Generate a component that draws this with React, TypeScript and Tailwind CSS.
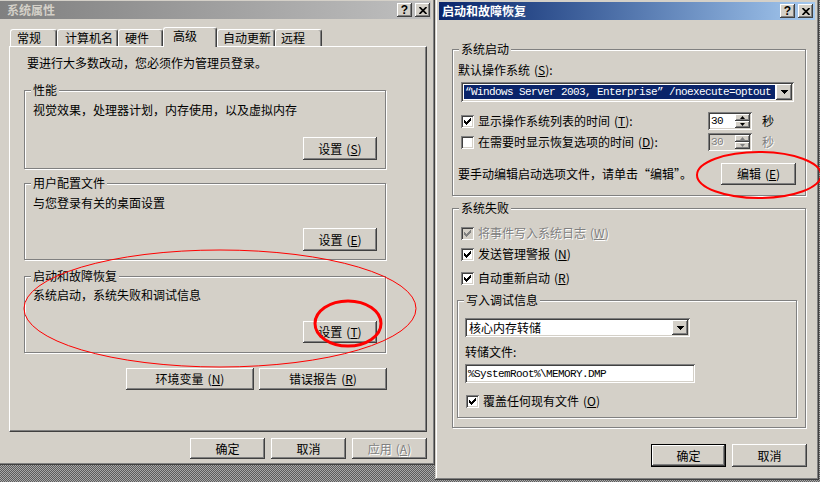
import React from "react";

const FRAME =
  "shadow-[inset_-1px_-1px_0_#404040,inset_1px_1px_0_#d4d0c8,inset_-2px_-2px_0_#808080,inset_2px_2px_0_#ffffff]";
const RAISED =
  "shadow-[inset_-1px_-1px_0_#404040,inset_1px_1px_0_#ffffff,inset_-2px_-2px_0_#808080,inset_2px_2px_0_#d4d0c8]";
const SUNKEN =
  "shadow-[inset_1px_1px_0_#808080,inset_-1px_-1px_0_#ffffff,inset_2px_2px_0_#404040,inset_-2px_-2px_0_#d4d0c8]";
const MONO = "font-['Liberation_Mono',monospace] text-[11px] tracking-[-0.6px]";
const DIS = "text-[#808080] [text-shadow:1px_1px_0_#ffffff]";

function M({ k }: { k: string }) {
  return (
    <span className="ml-[4px]">
      (<span className="underline">{k}</span>)
    </span>
  );
}

function Btn({
  className = "",
  children,
  def = false,
  disabled = false,
}: {
  className?: string;
  children: React.ReactNode;
  def?: boolean;
  disabled?: boolean;
}) {
  return (
    <div
      className={`flex items-center justify-center bg-[#d4d0c8] whitespace-nowrap ${
        def
          ? "border border-black shadow-[inset_-1px_-1px_0_#404040,inset_1px_1px_0_#ffffff,inset_-2px_-2px_0_#808080]"
          : RAISED
      } ${disabled ? DIS : "text-black"} ${className}`}
    >
      {children}
    </div>
  );
}

function CheckMark({ color }: { color: string }) {
  const pts = [
    [0, 2],
    [1, 3],
    [2, 4],
    [3, 3],
    [4, 2],
    [5, 1],
    [6, 0],
  ];
  return (
    <svg width="7" height="7" viewBox="0 0 7 7" shapeRendering="crispEdges">
      {pts.map(([x, y]) => (
        <rect key={x} x={x} y={y} width="1" height="3" fill={color} />
      ))}
    </svg>
  );
}

function Check({ checked, disabled = false }: { checked: boolean; disabled?: boolean }) {
  return (
    <span
      className={`flex w-[13px] h-[13px] shrink-0 items-center justify-center ${
        disabled ? "bg-[#d4d0c8]" : "bg-white"
      } ${SUNKEN}`}
    >
      {checked && <CheckMark color={disabled ? "#808080" : "#000000"} />}
    </span>
  );
}

function DropBtn() {
  return (
    <div className={`w-[16px] h-full shrink-0 flex items-center justify-center bg-[#d4d0c8] ${RAISED}`}>
      <svg width="7" height="4" viewBox="0 0 7 4" shapeRendering="crispEdges">
        <polygon points="0,0 7,0 3.5,4" fill="#000" />
      </svg>
    </div>
  );
}

function Spin({ disabled = false }: { disabled?: boolean }) {
  const c = disabled ? "#808080" : "#000000";
  return (
    <div
      className={`flex w-[44px] h-[18px] p-[2px] ${disabled ? "bg-[#d4d0c8]" : "bg-white"} ${SUNKEN}`}
    >
      <div className={`flex-1 flex items-center pl-[1px] ${MONO} ${disabled ? DIS : ""}`}>30</div>
      <div className="w-[15px] flex flex-col">
        <div className={`flex-1 flex items-center justify-center bg-[#d4d0c8] ${RAISED}`}>
          <svg width="5" height="3" viewBox="0 0 5 3">
            <polygon points="2.5,0 5,3 0,3" fill={c} />
          </svg>
        </div>
        <div className={`flex-1 flex items-center justify-center bg-[#d4d0c8] ${RAISED}`}>
          <svg width="5" height="3" viewBox="0 0 5 3">
            <polygon points="0,0 5,0 2.5,3" fill={c} />
          </svg>
        </div>
      </div>
    </div>
  );
}

function Group({
  label,
  className = "",
  children,
}: {
  label: string;
  className?: string;
  children?: React.ReactNode;
}) {
  return (
    <div
      className={`relative flex flex-col shrink-0 border border-[#808080] shadow-[1px_1px_0_#ffffff,inset_1px_1px_0_#ffffff] ${className}`}
    >
      <span className="absolute -top-[9px] left-[6px] bg-[#d4d0c8] px-[2px] leading-[16px]">
        {label}
      </span>
      {children}
    </div>
  );
}

function TitleBar({ title, active }: { title: string; active: boolean }) {
  return (
    <div
      className={`flex items-center shrink-0 h-[18px] ${
        active
          ? "bg-linear-to-r from-[#0a246a] to-[#a6caf0] text-white pl-[3px] pr-[2px]"
          : "bg-linear-to-r from-[#808080] to-[#c0c0c0] text-[#d4d0c8] pl-[7px] pr-[1px]"
      }`}
    >
      <span className="font-bold leading-[16px] flex-1">{title}</span>
      <div className="flex gap-[3px]">
        <div className={`w-[15px] h-[14px] flex items-center justify-center bg-[#d4d0c8] ${RAISED}`}>
          <span className="font-['Liberation_Sans',sans-serif] font-bold text-[12px] leading-[12px] text-black">
            ?
          </span>
        </div>
        <div className={`w-[15px] h-[14px] flex items-center justify-center bg-[#d4d0c8] ${RAISED}`}>
          <svg width="8" height="7" viewBox="0 0 8 7">
            <path d="M0.5 0 L7.5 7 M7.5 0 L0.5 7" stroke="#000" strokeWidth="1.7" />
          </svg>
        </div>
      </div>
    </div>
  );
}

const TAB =
  "flex items-start h-[17px] bg-[#d4d0c8] border-t border-l border-white border-r border-r-[#404040] rounded-t-[3px] shadow-[inset_-1px_0_0_#808080] shrink-0 whitespace-nowrap";

function LeftWindow() {
  return (
    <div
      className={`absolute left-[-4px] top-[-3px] w-[439px] h-[468px] bg-[#d4d0c8] p-[4px] flex flex-col ${FRAME}`}
    >
      <TitleBar title="系统属性" active={false} />
      <div className="mt-[8px] h-[19px] flex items-end pl-[10px] relative z-10 shrink-0">
        <div className={`${TAB} w-[47px] pl-[6px]`}>常规</div>
        <div className={`${TAB} w-[61px] pl-[7px]`}>计算机名</div>
        <div className={`${TAB} w-[45px] pl-[6px]`}>硬件</div>
        <div className={`${TAB} w-[54px] h-[20px] -mb-[1px] pl-[9px]`}>高级</div>
        <div className={`${TAB} w-[58px] pl-[5px]`}>自动更新</div>
        <div className={`${TAB} w-[47px] pl-[5px]`}>远程</div>
      </div>
      <div className="ml-[9px] w-[418px] h-[386px] shrink-0 flex flex-col border-t border-l border-white border-r border-b border-r-[#404040] border-b-[#404040] shadow-[inset_-1px_-1px_0_#808080]">
        <div className="mt-[8px] ml-[17px]">要进行大多数改动，您必须作为管理员登录。</div>
        <Group label="性能" className="mt-[19px] ml-[14px] w-[362px] h-[79px]">
          <div className="mt-[11px] ml-[8px]">视觉效果，处理器计划，内存使用，以及虚拟内存</div>
          <Btn className="mt-[19px] self-end mr-[8px] w-[74px] h-[23px]">
            设置<M k="S" />
          </Btn>
        </Group>
        <Group label="用户配置文件" className="mt-[14px] ml-[14px] w-[362px] h-[77px]">
          <div className="mt-[11px] ml-[8px]">与您登录有关的桌面设置</div>
          <Btn className="mt-[17px] self-end mr-[8px] w-[74px] h-[23px]">
            设置<M k="E" />
          </Btn>
        </Group>
        <Group label="启动和故障恢复" className="mt-[16px] ml-[14px] w-[362px] h-[77px]">
          <div className="mt-[10px] ml-[8px]">系统启动，系统失败和调试信息</div>
          <Btn className="mt-[18px] self-end mr-[8px] w-[74px] h-[22px]">
            设置<M k="T" />
          </Btn>
        </Group>
        <div className="mt-[15px] mr-[39px] flex justify-end gap-[5px]">
          <Btn className="w-[128px] h-[22px]">
            环境变量<M k="N" />
          </Btn>
          <Btn className="w-[128px] h-[22px]">
            错误报告<M k="R" />
          </Btn>
        </div>
      </div>
      <div className="mt-[6px] pr-[4px] flex justify-end gap-[6px]">
        <Btn className="w-[75px] h-[21px]">确定</Btn>
        <Btn className="w-[75px] h-[21px]">取消</Btn>
        <Btn className="w-[75px] h-[21px]" disabled>
          应用<M k="A" />
        </Btn>
      </div>
    </div>
  );
}

function RightWindow() {
  return (
    <div
      className={`absolute left-[435px] top-[-2px] w-[384px] h-[482px] bg-[#d4d0c8] p-[4px] flex flex-col ${FRAME}`}
    >
      <TitleBar title="启动和故障恢复" active />
      <Group label="系统启动" className="mt-[29px] ml-[13px] w-[354px] h-[147px]">
        <div className="mt-[12px] ml-[5px]">
          默认操作系统<M k="S" />:
        </div>
        <div className={`mt-[4px] ml-[8px] w-[333px] h-[20px] shrink-0 flex bg-white p-[2px] ${SUNKEN}`}>
          <div className="flex-1 min-w-0 flex items-center px-[1px] py-[1px] overflow-hidden">
            <div
              className={`w-full h-full flex items-center pl-[1px] bg-[#0a246a] text-white whitespace-nowrap overflow-hidden ${MONO}`}
            >
              “Windows Server 2003, Enterprise” /noexecute=optout
            </div>
          </div>
          <DropBtn />
        </div>
        <div className="mt-[10px] ml-[8px] h-[18px] flex items-center shrink-0">
          <Check checked />
          <span className="ml-[4px] w-[230px]">
            显示操作系统列表的时间<M k="T" />:
          </span>
          <Spin />
          <span className="ml-[10px]">秒</span>
        </div>
        <div className="mt-[3px] ml-[8px] h-[18px] flex items-center shrink-0">
          <Check checked={false} />
          <span className="ml-[4px] w-[230px]">
            在需要时显示恢复选项的时间<M k="D" />:
          </span>
          <Spin disabled />
          <span className={`ml-[10px] ${DIS}`}>秒</span>
        </div>
        <div className="mt-[12px] ml-[5px] mr-[9px] h-[22px] flex items-center justify-between shrink-0">
          <span>要手动编辑启动选项文件，请单击“编辑”。</span>
          <Btn className="w-[75px] h-[22px]">
            编辑<M k="E" />
          </Btn>
        </div>
      </Group>
      <Group label="系统失败" className="mt-[12px] ml-[13px] w-[354px] h-[220px]">
        <div className="mt-[16px] ml-[8px] h-[16px] flex items-center">
          <Check checked disabled />
          <span className={`ml-[4px] ${DIS}`}>
            将事件写入系统日志<M k="W" />
          </span>
        </div>
        <div className="mt-[5px] ml-[8px] h-[16px] flex items-center">
          <Check checked />
          <span className="ml-[4px]">
            发送管理警报<M k="N" />
          </span>
        </div>
        <div className="mt-[8px] ml-[8px] h-[16px] flex items-center">
          <Check checked />
          <span className="ml-[4px]">
            自动重新启动<M k="R" />
          </span>
        </div>
        <Group label="写入调试信息" className="mt-[14px] ml-[4px] w-[340px] h-[118px]">
          <div className={`mt-[17px] ml-[7px] w-[225px] h-[19px] shrink-0 flex bg-white p-[2px] ${SUNKEN}`}>
            <div className="flex-1 flex items-center pl-[2px]">核心内存转储</div>
            <DropBtn />
          </div>
          <div className="mt-[7px] ml-[7px]">转储文件:</div>
          <div
            className={`mt-[4px] ml-[7px] w-[230px] h-[19px] shrink-0 flex items-center bg-white pl-[3px] ${SUNKEN} ${MONO}`}
          >
            %SystemRoot%\MEMORY.DMP
          </div>
          <div className="mt-[10px] ml-[8px] h-[16px] flex items-center">
            <Check checked />
            <span className="ml-[4px]">
              覆盖任何现有文件<M k="O" />
            </span>
          </div>
        </Group>
      </Group>
      <div className="mt-[16px] pr-[8px] flex justify-end gap-[6px]">
        <Btn className="w-[75px] h-[23px]" def>
          确定
        </Btn>
        <Btn className="w-[75px] h-[23px]">取消</Btn>
      </div>
    </div>
  );
}

export default function App() {
  return (
    <div className="relative w-[820px] h-[482px] overflow-hidden bg-[#808080] bg-[image:repeating-conic-gradient(#5c5c5c_0%_25%,#a8a8a8_0%_50%)] bg-[length:2px_2px] font-['Noto_Sans_CJK_SC',sans-serif] text-[12px] leading-[16px] text-black">
      <LeftWindow />
      <RightWindow />
      <svg className="absolute inset-0 pointer-events-none" width="820" height="482">
        <ellipse cx="220" cy="308.5" rx="196" ry="58.5" fill="none" stroke="#ff0000" strokeWidth="1" />
        <ellipse cx="348" cy="323.5" rx="33" ry="22.5" fill="none" stroke="#ff0000" strokeWidth="3" />
        <ellipse cx="759" cy="175" rx="62" ry="23" fill="none" stroke="#ff0000" strokeWidth="2" />
      </svg>
    </div>
  );
}
